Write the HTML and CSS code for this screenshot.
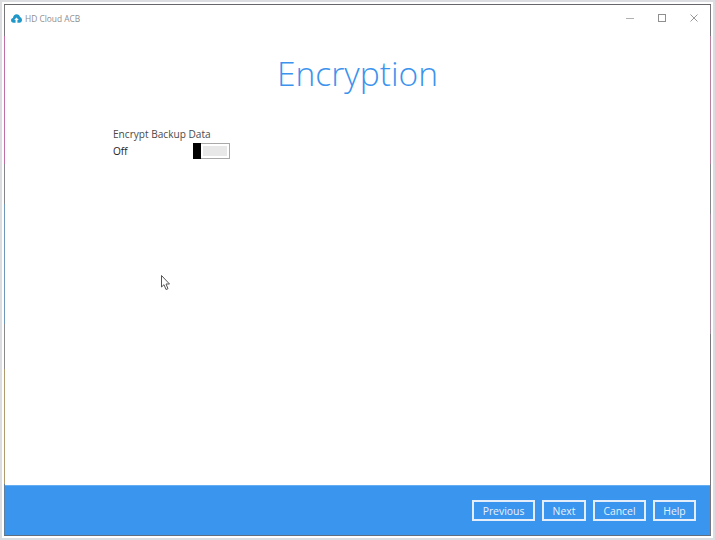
FILE: index.html
```html
<!DOCTYPE html>
<html lang="en">
<head>
<meta charset="utf-8">
<title>HD Cloud ACB</title>
<link rel="stylesheet" href="styles.css">
</head>
<body>
<div class="frame">
  <div class="window">
    <header class="titlebar">
      <div class="app">
        <svg class="app-icon" width="11" height="9" viewBox="0 0 13 10"><path fill="#1f97c9" d="M3 10C1.2 10 0 8.800 0 7.200 0 5.800 1 4.700 2.300 4.500 2.600 2 4.400 0 6.700 0c2 0 3.600 1.400 4 3.300C12.100 3.900 13 5.200 13 6.800 13 8.700 11.700 10 10 10H7.600V6.800H9.200L6.500 3.800 3.800 6.800H5.400V10Z"/></svg>
        <span class="app-name">HD Cloud ACB</span>
      </div>
      <div class="controls">
        <svg width="8" height="8" viewBox="0 0 8 8"><path stroke="#b0b0b0" d="M0 4.500H8"/></svg>
        <svg width="8" height="8" viewBox="0 0 8 8"><rect x=".5" y=".5" width="7" height="7" fill="none" stroke="#8f8f8f"/></svg>
        <svg width="8" height="8" viewBox="0 0 8 8"><path stroke="#8f8f8f" stroke-width=".9" fill="none" d="M.5.500L7.500 7.500M7.500.500L.5 7.500"/></svg>
      </div>
    </header>
    <main class="content">
      <h1 class="title">Encryption</h1>
      <section class="setting">
        <div class="setting-label">Encrypt Backup Data</div>
        <div class="setting-row">
          <span class="state">Off</span>
          <span class="toggle"><span class="knob"></span><span class="track"></span></span>
        </div>
      </section>
    </main>
    <footer class="footer">
      <button class="btn btn-prev">Previous</button>
      <button class="btn btn-next">Next</button>
      <button class="btn btn-cancel">Cancel</button>
      <button class="btn btn-help">Help</button>
    </footer>
    <svg class="cursor" width="11" height="16" viewBox="0 0 11 16"><path fill="#fff" stroke="#555" stroke-width="1" d="M.5.500V12L3 9.700 5 14.500 7 13.700 5 9H8.500Z"/></svg>
  </div>
</div>
</body>
</html>
```
FILE: styles.css
```css
* { box-sizing: border-box; }
html, body { margin: 0; height: 100%; background: #fff; }
body { font-family: "Open Sans", "Noto Sans", sans-serif; overflow: hidden; }
.frame {
  width: 715px; height: 540px;
  border: 2px solid #dcdde0;
  padding: 2px;
  background: #fff;
}
.window {
  position: relative;
  width: 707px; height: 532px;
  display: flex; flex-direction: column;
  padding: 1px;
  background:
    linear-gradient(#66666b, #66666b) top / 100% 1px no-repeat,
    linear-gradient(#5f6f80, #5f6f80) bottom / 100% 1px no-repeat,
    linear-gradient(#77777c 0 32px, #bf6fa6 32px 160px, #85858c 160px 200px, #6f98b8 200px 320px, #8a8a8a 320px 365px, #b09a70 365px 480px, #5f7f9f 480px) left / 1px 100% no-repeat,
    linear-gradient(#77777c 0 32px, #b87fa0 32px 160px, #85858c 160px 210px, #a58aa0 210px 330px, #77777c 330px) right / 1px 100% no-repeat;
  background-color: #fff;
}
.titlebar {
  height: 26px; flex: none;
  display: flex; align-items: center; justify-content: space-between;
  padding: 0 12px 0 6px;
}
.app { display: flex; align-items: center; gap: 3px; }
.app-icon { display: block; }
.app-name { font-size: 8.400px; color: #8e8e8e; }
.controls { display: flex; gap: 24px; }
.controls svg { display: block; }
.content { flex: 1; display: flex; flex-direction: column; }
.title {
  margin: 19px 0 0;
  font-size: 33.600px; line-height: 46px; font-weight: 300;
  color: #3c93ee; text-align: center;
}
.setting { margin: 31px 0 0 108px; }
.setting-label { font-size: 10.100px; line-height: 14px; color: #4a4a4a; }
.setting-row { display: flex; align-items: center; margin-top: 1px; height: 18px; }
.state { width: 80px; font-size: 10.100px; font-weight: 500; color: #222; }
.toggle {
  display: flex; width: 37px; height: 16px;
  border: 1px solid #a9a9a9; background: #fff;
}
.knob { width: 8px; margin: -1px 0 -1px -1px; background: #000; }
.track { flex: 1; margin: 2px; background: #e8e8e8; }
.footer {
  height: 50px; flex: none;
  background: #3a95ee;
  border-top: 1px solid #66aef2;
  display: flex; align-items: center; justify-content: flex-end;
  gap: 7px; padding-right: 14px;
}
.btn {
  height: 21px; padding: 0;
  border: 2px solid #e4eefa; background: transparent;
  color: #e8f1fb; font: 500 10.400px "Open Sans", "Noto Sans", sans-serif;
}
.btn-prev { width: 63px; }
.btn-next { width: 44px; }
.btn-cancel { width: 53px; }
.btn-help { width: 43px; }
.cursor { position: absolute; left: 157px; top: 271px; }
```
